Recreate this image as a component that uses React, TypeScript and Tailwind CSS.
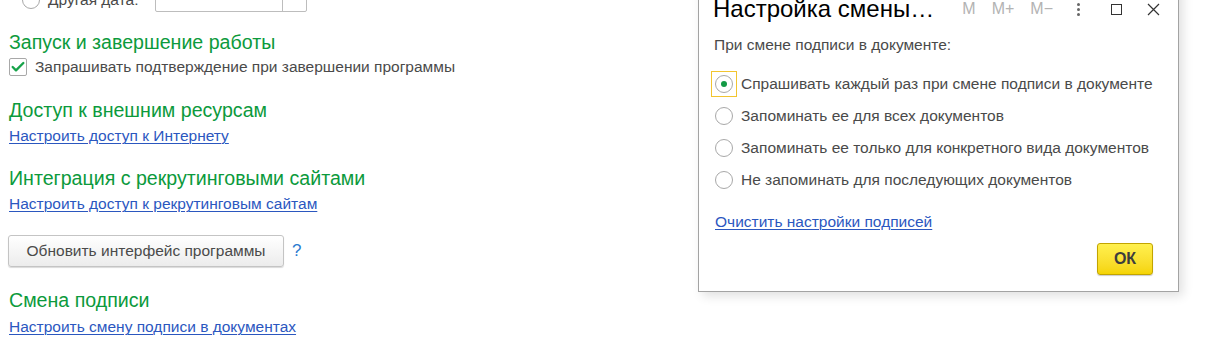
import { Check } from 'lucide-react';

const font = { fontFamily: '"Liberation Sans", Arial, sans-serif' };

const Heading = ({ children, className = '' }: { children: React.ReactNode; className?: string }) => (
    <div className={`h-6 flex items-center text-[19.6px] text-[#0c9a3c] ${className}`}>{children}</div>
);

const Link = ({ children, className = '' }: { children: React.ReactNode; className?: string }) => (
    <div className={`h-6 flex items-center ${className}`}>
        <a className="text-[15.5px] text-[#2b57bf] underline underline-offset-2 decoration-1">{children}</a>
    </div>
);

const Radio = ({ checked = false }: { checked?: boolean }) => (
    <span className="w-[18px] h-[18px] rounded-full border border-[#a8a8a8] bg-white flex items-center justify-center shrink-0">
        {checked && <span className="w-[6px] h-[6px] rounded-full bg-[#139a45]" />}
    </span>
);

const options = [
    'Спрашивать каждый раз при смене подписи в документе',
    'Запоминать ее для всех документов',
    'Запоминать ее только для конкретного вида документов',
    'Не запоминать для последующих документов',
];

const Dialog = () => (
    <div className="absolute left-[698px] top-[-16px] w-[481px] h-[308px] bg-white border border-[#a3a3a3] shadow-[4px_4px_10px_rgba(0,0,0,0.12)] flex flex-col">
        <div className="h-12 shrink-0 flex items-center pl-[14px] pr-[18px]">
            <span className="text-[24px] text-black">Настройка смены…</span>
            <div className="ml-auto flex items-center text-[16px] text-[#b3b3b3]">
                <span className="mr-[16px]">M</span>
                <span className="mr-[16px]">M+</span>
                <span className="mr-[24px]">M−</span>
                <span className="flex flex-col gap-[2px] mr-[31px]">
                    <span className="w-[3px] h-[3px] rounded-full bg-[#666]" />
                    <span className="w-[3px] h-[3px] rounded-full bg-[#666]" />
                    <span className="w-[3px] h-[3px] rounded-full bg-[#666]" />
                </span>
                <span className="w-[11px] h-[11px] border border-[#333] mr-[25px]" />
                <svg width="13" height="13" viewBox="0 0 13 13" className="stroke-[#333]">
                    <path d="M1 1L12 12M12 1L1 12" strokeWidth="1.2" />
                </svg>
            </div>
        </div>
        <div className="h-6 flex items-center pl-[15px] text-[15.5px] text-[#4a4a4a]">При смене подписи в документе:</div>
        <div className="mt-[11px] pl-[12px] flex flex-col">
            {options.map((o, i) => (
                <div key={o} className="h-8 flex items-center">
                    <span
                        className={`w-[26px] h-[26px] flex items-center justify-center ${
                            i === 0 ? 'border border-[#f2c530]' : 'border border-transparent'
                        }`}
                    >
                        <Radio checked={i === 0} />
                    </span>
                    <span className="ml-[4px] text-[15.5px] text-[#4a4a4a]">{o}</span>
                </div>
            ))}
        </div>
        <Link className="mt-[14px] pl-[16px]">Очистить настройки подписей</Link>
        <div className="mt-[9px] flex justify-end pr-[25px]">
            <button className="w-[56px] h-[32px] rounded-[3px] border border-[#c2a400] bg-gradient-to-b from-[#fff04d] to-[#f5d400] text-[16px] font-bold text-[#3d3d3d] shadow-[0_1px_1px_rgba(0,0,0,0.2)]">
                ОК
            </button>
        </div>
    </div>
);

export default function App() {
    return (
        <div className="relative w-[1222px] h-[344px] overflow-hidden bg-white" style={font}>
            <div className="mt-[-12px] pl-[9px] flex flex-col">
                <div className="h-6 flex items-center">
                    <span className="ml-[13px]"><Radio /></span>
                    <span className="ml-[8px] w-[107px] text-[15.5px] text-[#4a4a4a]">Другая дата:</span>
                    <span className="w-[152px] h-[24px] border border-[#bdbdbd] rounded-[2px] flex">
                        <span className="ml-auto w-[24px] border-l border-[#bdbdbd]" />
                    </span>
                </div>
                <Heading className="mt-[19px]">Запуск и завершение работы</Heading>
                <div className="h-6 flex items-center">
                    <span className="w-[18px] h-[18px] border border-[#a8a8a8] rounded-[2px] bg-white flex items-center justify-center">
                        <Check size={18} strokeWidth={3.5} className="text-[#17a34a]" />
                    </span>
                    <span className="ml-[8px] text-[15.5px] text-[#4a4a4a]">Запрашивать подтверждение при завершении программы</span>
                </div>
                <Heading className="mt-[20px]">Доступ к внешним ресурсам</Heading>
                <Link className="mt-px">Настроить доступ к Интернету</Link>
                <Heading className="mt-[19px]">Интеграция с рекрутинговыми сайтами</Heading>
                <Link className="mt-px">Настроить доступ к рекрутинговым сайтам</Link>
                <div className="mt-[19px] flex items-center">
                    <button className="h-[32px] w-[276px] ml-[-1px] rounded-[3px] border border-[#c4c4c4] bg-gradient-to-b from-white to-[#ececec] shadow-[0_1px_1px_rgba(0,0,0,0.15)] text-[15.5px] text-[#4a4a4a]">
                        Обновить интерфейс программы
                    </button>
                    <span className="ml-[8px] text-[17px] text-[#2b7bd0]">?</span>
                </div>
                <Heading className="mt-[22px]">Смена подписи</Heading>
                <Link className="mt-[2px]">Настроить смену подписи в документах</Link>
            </div>
            <Dialog />
        </div>
    );
}
